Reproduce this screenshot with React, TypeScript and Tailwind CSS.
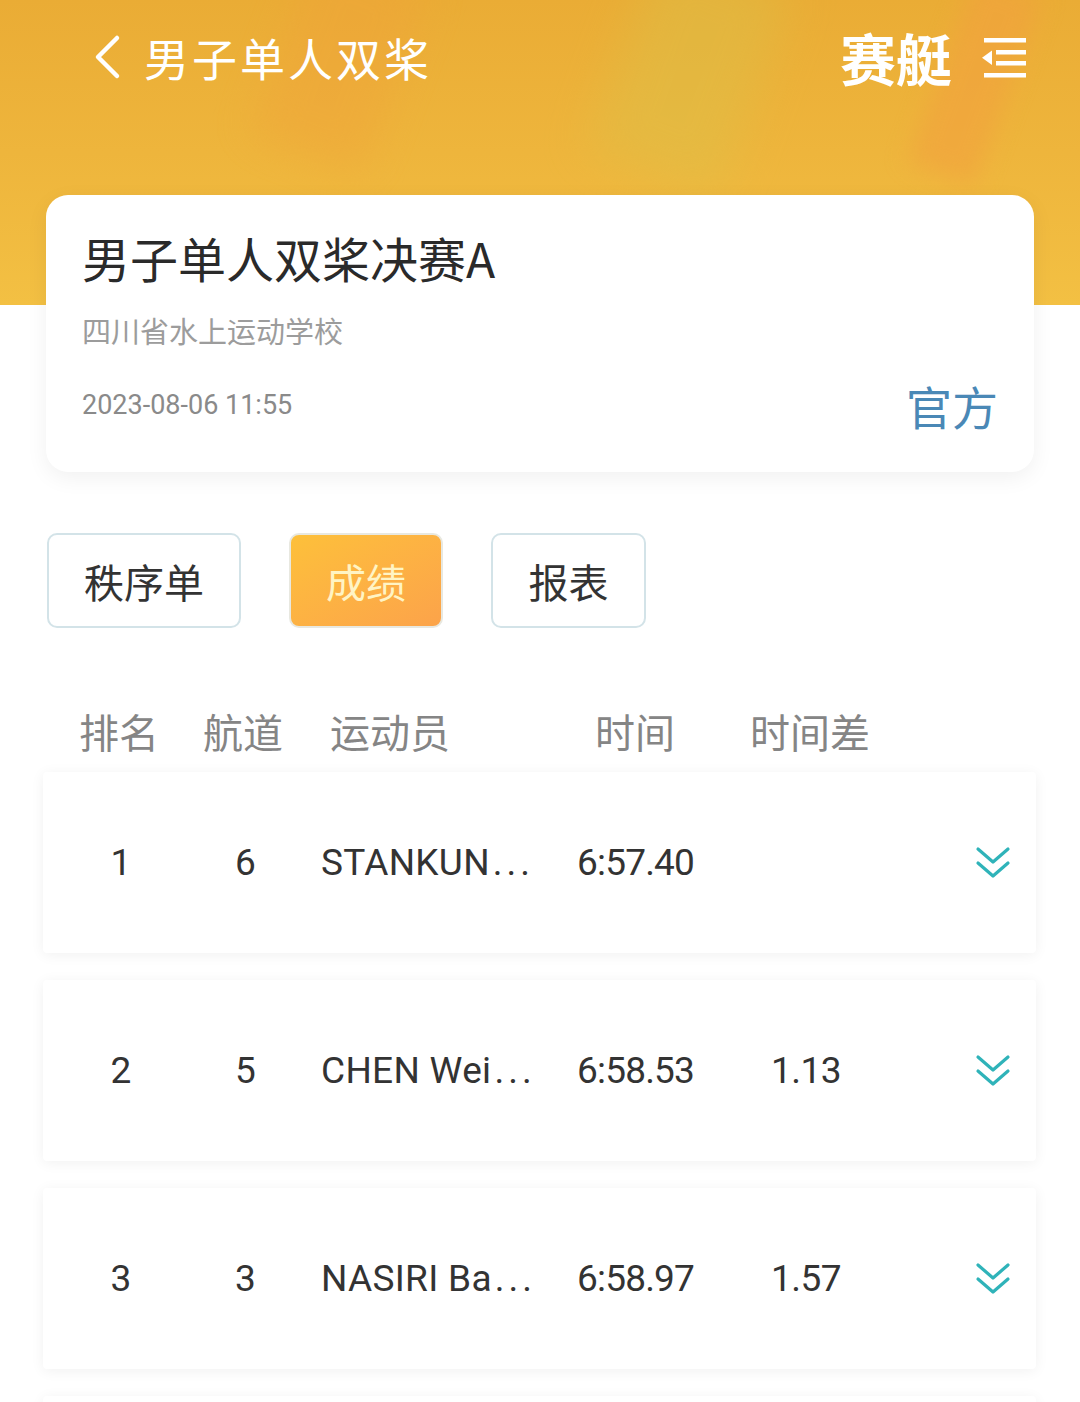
import React from "react";

const rows = [
  { rank: "1", lane: "6", name: "STANKUN", time: "6:57.40", diff: "" },
  { rank: "2", lane: "5", name: "CHEN Wei", time: "6:58.53", diff: "1.13" },
  { rank: "3", lane: "3", name: "NASIRI Ba", time: "6:58.97", diff: "1.57" },
];

function Chevrons() {
  return (
    <svg width="38" height="40" viewBox="0 0 38 40" fill="none" stroke="#2fb3b9" strokeWidth="3.2" strokeLinecap="round" strokeLinejoin="round">
      <path d="M4 6 L19 19 L34 6" />
      <path d="M4 20 L19 33 L34 20" />
    </svg>
  );
}

export default function App() {
  const cjk = { fontFamily: '"Noto Sans CJK SC", "Noto Sans", sans-serif' };
  const num = { fontFamily: 'Roboto, "Noto Sans CJK SC", sans-serif' };
  return (
    <div className="w-[1080px] h-[1402px] overflow-hidden bg-white relative" style={cjk}>
      {/* header background */}
      <div className="absolute left-0 top-0 w-[1080px] h-[305px] bg-gradient-to-b from-[#eaac35] via-[#eeb53c] to-[#f3c043] overflow-hidden">
        <div className="absolute left-[280px] top-[-40px] w-[120px] h-[200px] bg-[#f0a23a] opacity-40 blur-[20px] rotate-[20deg]" />
        <div className="absolute left-[620px] top-[-40px] w-[140px] h-[220px] bg-[#d9c24a] opacity-40 blur-[24px] rotate-[20deg]" />
        <div className="absolute left-[940px] top-[-20px] w-[70px] h-[200px] bg-[#f2a23e] opacity-60 blur-[12px] rotate-[20deg]" />
      </div>

      <div className="relative flex flex-col">
        {/* top bar */}
        <div className="h-[120px] flex items-start pt-[26px] pl-[92px] pr-[52px]">
          <div className="flex items-center gap-[22px] h-[62px]">
            <svg width="30" height="46" viewBox="0 0 30 46" fill="none" stroke="#ffffff" strokeWidth="4.5" strokeLinecap="round" strokeLinejoin="round">
              <path d="M25 4 L6 23 L25 42" />
            </svg>
            <span className="text-[45px] text-white leading-none tracking-[3px]">男子单人双桨</span>
          </div>
          <div className="ml-auto flex items-center gap-[28px] h-[62px]">
            <span className="text-[56px] font-bold text-white leading-none">赛艇</span>
            <svg width="48" height="42" viewBox="0 0 48 42" fill="#ffffff">
              <rect x="4" y="2" width="42" height="4.5" />
              <rect x="16" y="14" width="30" height="4.5" />
              <rect x="16" y="25" width="30" height="4.5" />
              <rect x="4" y="37" width="42" height="4.5" />
              <path d="M2 21.7 L12 14.5 L12 29 Z" />
            </svg>
          </div>
        </div>

        {/* info card */}
        <div className="mt-[75px] mx-[46px] w-[988px] h-[277px] rounded-[22px] bg-white shadow-[0_6px_22px_rgba(0,0,0,0.06)] px-[36px] pt-[38px] relative flex flex-col">
          <div className="text-[48px] text-[#2a2a2a] leading-none">男子单人双桨决赛A</div>
          <div className="mt-[35px] text-[29px] text-[#9c9c9c] leading-none">四川省水上运动学校</div>
          <div className="mt-[37px] flex items-end">
            <span className="text-[27px] text-[#8a8a8a] leading-none" style={num}>2023-08-06 11:55</span>
            <span className="ml-auto mb-[-9px] text-[46px] text-[#4a88b6] leading-none">官方</span>
          </div>
        </div>

        {/* tabs */}
        <div className="mt-[61px] ml-[47px] flex gap-[48px] h-[95px]">
          <div className="w-[194px] h-[95px] rounded-[10px] border-2 border-[#d3e3e8] bg-white flex items-center justify-center text-[40px] text-[#333]">秩序单</div>
          <div className="w-[154px] h-[95px] rounded-[10px] border-2 border-[#e8e8e0] bg-gradient-to-br from-[#fdc03a] to-[#fca34a] flex items-center justify-center text-[40px] text-[#fff4c4]">成绩</div>
          <div className="w-[155px] h-[95px] rounded-[10px] border-2 border-[#d3e3e8] bg-white flex items-center justify-center text-[40px] text-[#333]">报表</div>
        </div>

        {/* table header */}
        <div className="mt-[80px] h-[46px] flex items-center text-[40px] text-[#858585] leading-none">
          <span className="ml-[79px]">排名</span>
          <span className="ml-[44px]">航道</span>
          <span className="ml-[47px]">运动员</span>
          <span className="ml-[145px]">时间</span>
          <span className="ml-[75px]">时间差</span>
        </div>

        {/* rows */}
        <div className="mt-[18px] flex flex-col gap-[27px] mx-[43px] w-[993px]">
          {[...rows, { rank: "", lane: "", name: "", time: "", diff: "" }].map((r, i) => (
            <div key={i} className="h-[181px] bg-white rounded-[4px] shadow-[0_2px_14px_rgba(0,0,0,0.06)] flex items-center text-[37px] text-[#333] leading-none" style={num}>
              {r.rank !== "" && (
                <>
                  <span className="w-[156px] text-center">{r.rank}</span>
                  <span className="ml-[36px] w-[86px] text-left">{r.lane}</span>
                  <span className="w-[256px] tracking-[0.3px]">
                    {r.name}
                    <span className="tracking-[4px] ml-[3px]">...</span>
                  </span>
                  <span className="w-[194px] tracking-[-0.8px]">{r.time}</span>
                  <span className="w-[200px] tracking-[-0.5px]">{r.diff}</span>
                  <span className="ml-auto mr-[24px] flex">
                    <Chevrons />
                  </span>
                </>
              )}
            </div>
          ))}
        </div>
      </div>
    </div>
  );
}
